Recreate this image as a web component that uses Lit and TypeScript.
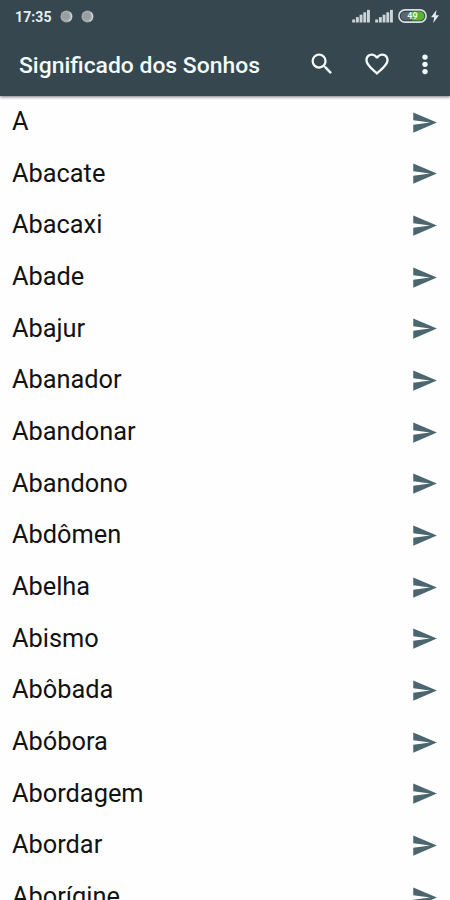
import { LitElement, html, css, svg } from "lit";
import { customElement, property } from "lit/decorators.js";

const WORDS = [
  "A", "Abacate", "Abacaxi", "Abade", "Abajur", "Abanador", "Abandonar", "Abandono",
  "Abdômen", "Abelha", "Abismo", "Abôbada", "Abóbora", "Abordagem", "Abordar", "Aborígine",
];

@customElement("status-bar")
class StatusBar extends LitElement {
  static styles = css`
    :host { display: flex; align-items: center; height: 32px; padding: 0 11px 0 15px; color: #e6edf0; }
    .time { font: 700 14px/33px Roboto, sans-serif; width: 37px; letter-spacing: 0.1px; padding-top: 2px; }
    .dots { display: flex; gap: 8px; margin-left: 8px; flex: 1; }
    svg { display: block; }
    .signal { margin-right: 5px; }
    .battery { margin: 0 4px 0 0; }
    .level { font: 700 9px Roboto, sans-serif; }
  `;

  private signal() {
    return html`<svg class="signal" width="18" height="14" viewBox="0 0 18 14" fill="#cbd4d8">
      ${[0, 1, 2, 3, 4].map((i) => svg`<rect x=${i * 3.7 + 0.2} y=${10.5 - i * 2.4} width="2.9" height=${3 + i * 2.4} />`)}
    </svg>`;
  }

  private dot() {
    return html`<svg width="13" height="13" viewBox="0 0 13 13">
      <circle cx="6.5" cy="6.5" r="6" fill="#a3abad" />
      <path d="M9.8 2.6A5.2 5.2 0 0 1 8.5 11.2" fill="none" stroke="#d3d8d9" stroke-width="1.2" />
      <circle cx="5.8" cy="6" r="3.6" fill="#989fa1" />
    </svg>`;
  }

  render() {
    return html`
      <span class="time">17:35</span>
      <span class="dots">${this.dot()}${this.dot()}</span>
      ${this.signal()}${this.signal()}
      <svg class="battery" width="29" height="14" viewBox="0 0 29 14">
        <rect x="0.9" y="0.9" width="27.2" height="12.2" rx="6.1" fill="none" stroke="#d7dfe1" stroke-width="1.6" />
        <path d="M7 3H14V11H7A4 4 0 0 1 7 3Z" fill="#58686e" />
        <path d="M14 2.6H22A4.4 4.4 0 0 1 22 11.4H14Z" fill="#55b531" />
        <text class="level" x="14.5" y="10.2" text-anchor="middle" fill="#edf4ee">49</text>
      </svg>
      <svg width="8" height="13" viewBox="0 0 8 13"><path d="M5.5 0 0 7.3H3.2L2.2 13 8 5.3H4.7Z" fill="#e4ebee" /></svg>
    `;
  }
}

@customElement("app-toolbar")
class AppToolbar extends LitElement {
  static styles = css`
    :host { display: flex; align-items: center; height: 64px; padding-left: 19px; box-sizing: border-box; color: #f3fafb; }
    h1 { margin: 0; flex: 1; font: 500 22.9px/64px Roboto, sans-serif; white-space: nowrap; padding-top: 3px; }
    svg { display: block; fill: currentColor; }
    .search { margin-right: 27px; }
    .heart { margin-right: 20px; }
    .more { margin-right: 11px; }
  `;
  render() {
    return html`
      <h1>Significado dos Sonhos</h1>
      <svg class="search" width="28" height="28" viewBox="0 0 24 24"><path d="M15.5 14h-.79l-.28-.27A6.471 6.471 0 0 0 16 9.5 6.5 6.5 0 1 0 9.5 16c1.61 0 3.09-.59 4.23-1.57l.27.28v.79l5 4.99L20.49 19l-4.99-5zm-6 0C7.01 14 5 11.99 5 9.5S7.01 5 9.5 5 14 7.01 14 9.5 11.99 14 9.5 14z" /></svg>
      <svg class="heart" width="28" height="28" viewBox="0 0 24 24"><path d="M16.5 3c-1.74 0-3.41.81-4.5 2.09C10.91 3.81 9.24 3 7.5 3 4.42 3 2 5.42 2 8.5c0 3.78 3.4 6.86 8.55 11.54L12 21.35l1.45-1.32C18.6 15.36 22 12.28 22 8.5 22 5.42 19.58 3 16.5 3zm-4.4 15.55l-.1.1-.1-.1C7.14 14.24 4 11.39 4 8.5 4 6.5 5.5 5 7.5 5c1.54 0 3.04.99 3.57 2.36h1.87C13.46 5.99 14.96 5 16.5 5c2 0 3.5 1.5 3.5 3.5 0 2.89-3.14 5.74-7.9 10.05z" /></svg>
      <svg class="more" width="28" height="28" viewBox="0 0 24 24"><circle cx="12" cy="6.1" r="2.3" /><circle cx="12" cy="12.3" r="2.3" /><circle cx="12" cy="18.5" r="2.3" /></svg>
    `;
  }
}

@customElement("word-row")
class WordRow extends LitElement {
  @property() word = "";
  static styles = css`
    :host { display: flex; align-items: center; justify-content: space-between; height: 51.67px; padding: 0 12.2px 0 12px; }
    span { font: 400 25.35px/50px Roboto, sans-serif; color: #121212; padding-bottom: 1.4px; }
    svg { display: block; fill: #4b666f; margin-top: 1px; }
  `;
  render() {
    return html`<span>${this.word}</span>
      <svg width="27" height="27" viewBox="0 0 24 24"><path d="M2.01 21 23 12 2.01 3 2 10l15 2-15 2z" /></svg>`;
  }
}

@customElement("app-root")
class AppRoot extends LitElement {
  static styles = css`
    :host { display: flex; flex-direction: column; height: 900px; overflow: hidden; background: #fefefe; }
    header { position: relative; flex: none; height: 96px; background: #37474f; box-shadow: 0 1px 3px rgba(20, 25, 40, 0.6); }
    main { flex: 1; min-height: 0; overflow: hidden; margin-top: -0.1px; }
  `;
  render() {
    return html`
      <header><status-bar></status-bar><app-toolbar></app-toolbar></header>
      <main>${WORDS.map((w) => html`<word-row .word=${w}></word-row>`)}</main>
    `;
  }
}
